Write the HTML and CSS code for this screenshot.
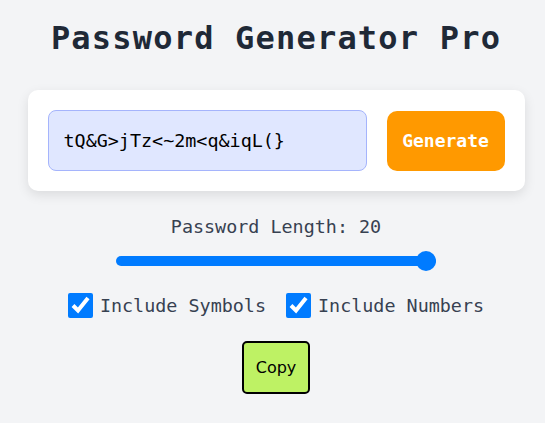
FILE: index.html
```html
<!DOCTYPE html>
<html lang="en">
<head>
<meta charset="utf-8">
<title>Password Generator Pro</title>
<link rel="stylesheet" href="styles.css">
</head>
<body>
<main class="app">
  <h1 class="title">Password Generator Pro</h1>
  <section class="card">
    <input class="password" type="text" value="tQ&amp;G&gt;jTz&lt;~2m&lt;q&amp;iqL(}" readonly>
    <button class="generate" type="button">Generate</button>
  </section>
  <label class="length-label" for="len">Password Length: 20</label>
  <input class="slider" id="len" type="range" min="4" max="20" value="20">
  <div class="options">
    <label class="option"><input type="checkbox" checked> Include Symbols</label>
    <label class="option"><input type="checkbox" checked> Include Numbers</label>
  </div>
  <button class="copy" type="button">Copy</button>
</main>
</body>
</html>
```
FILE: styles.css
```css
html, body {
  margin: 0;
  background: #f3f4f6;
}
body {
  padding: 20px 0 0 7px;
  font-family: "DejaVu Sans Mono", monospace;
  color: #374151;
}
.app {
  display: flex;
  flex-direction: column;
  align-items: center;
}
.title {
  margin: 0 0 33px;
  font-size: 32px;
  letter-spacing: 1.2px;
  font-weight: bold;
  color: #1f2937;
  line-height: 37px;
}
.card {
  width: 497px;
  box-sizing: border-box;
  padding: 20px;
  background: #ffffff;
  border-radius: 10px;
  box-shadow: 0 4px 12px rgba(0, 0, 0, 0.1);
  display: flex;
  align-items: center;
  gap: 20px;
}
.password {
  width: 319px;
  height: 61px;
  box-sizing: border-box;
  padding: 0 15px;
  border: 1px solid #a5b4fc;
  border-radius: 8px;
  background: #e0e7ff;
  font-family: "DejaVu Sans Mono", monospace;
  font-size: 18.4px;
  color: #000;
  outline: none;
}
.generate {
  width: 118px;
  height: 60px;
  border: none;
  border-radius: 10px;
  background: #ff9900;
  color: #ffffff;
  font-family: "DejaVu Sans Mono", monospace;
  font-weight: bold;
  font-size: 18px;
  padding: 0;
}
.length-label {
  margin-top: 25px;
  font-size: 18.4px;
}
.slider {
  -webkit-appearance: none;
  appearance: none;
  margin: 19px 0 0;
  width: 320px;
  height: 10px;
  border-radius: 5px;
  background: #007bff;
  outline: none;
}
.slider::-webkit-slider-thumb {
  -webkit-appearance: none;
  appearance: none;
  width: 20px;
  height: 20px;
  border-radius: 50%;
  background: #007bff;
}
.options {
  margin-top: 27px;
  display: flex;
  gap: 20px;
  align-items: center;
}
.option {
  display: flex;
  align-items: center;
  gap: 7px;
  font-size: 18.4px;
}
.option input {
  width: 25px;
  height: 25px;
  margin: 0;
  accent-color: #007bff;
}
.copy {
  margin-top: 23px;
  padding: 15px 12px;
  border: 2px solid #000;
  border-radius: 5px;
  background: #bef264;
  color: #000;
  font-family: "DejaVu Sans", sans-serif;
  font-size: 16px;
}
```
